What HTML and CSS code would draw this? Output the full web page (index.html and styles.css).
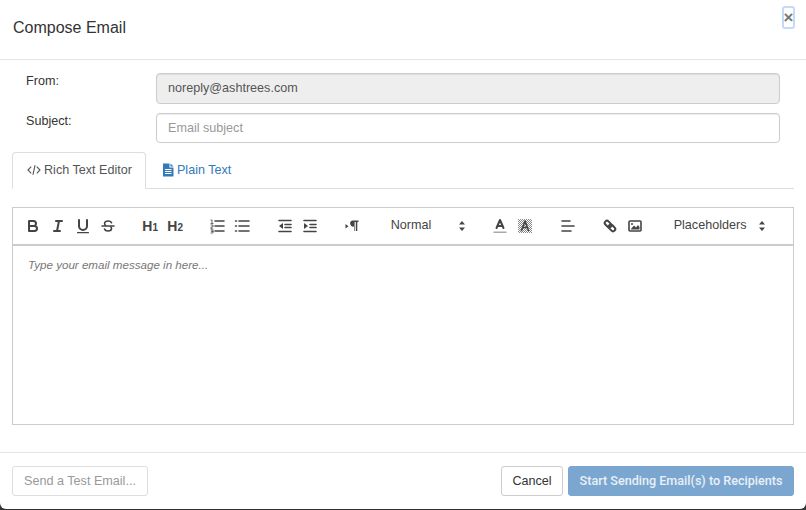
FILE: index.html
```html
<!DOCTYPE html>
<html lang="en">
<head>
<meta charset="utf-8">
<title>Compose Email</title>
<link rel="stylesheet" href="styles.css">
</head>
<body>
<div class="modal">
  <header class="modal-header">
    <h4 class="modal-title">Compose Email</h4>
    <button class="close" type="button">×</button>
  </header>
  <div class="modal-body">
    <div class="form-row">
      <label class="form-label">From:</label>
      <div class="form-input readonly">noreply@ashtrees.com</div>
    </div>
    <div class="form-row">
      <label class="form-label">Subject:</label>
      <div class="form-input placeholder">Email subject</div>
    </div>
    <nav class="tabs">
      <a class="tab active"><svg class="tab-icon" viewBox="0 0 14 14"><path d="M4.2 3.6 1 7l3.2 3.4M9.8 3.6 13 7l-3.2 3.4M8.100 2.200 5.900 11.800" fill="none" stroke="#555" stroke-width="1.100"/></svg>Rich Text Editor</a>
      <a class="tab"><svg class="tab-icon file" viewBox="0 0 11 14"><path d="M0 .5h6.500v4h4V13.500H0Z" fill="#337ab7"/><path d="M7.500.5l3 3h-3Z" fill="#337ab7"/><path d="M2 6.500h6.500M2 8.500h6.500M2 10.500h6.500" stroke="#fff" stroke-width="1"/></svg>Plain Text</a>
    </nav>
    <div class="editor">
      <div class="toolbar">
        <div class="group">
          <span class="btn"><svg viewBox="0 0 18 18"><path class="s" d="M5 4h4.500a2.500 2.500 0 0 1 0 5H5ZM5 9h5.500a2.500 2.500 0 0 1 0 5H5Z"/></svg></span>
          <span class="btn"><svg viewBox="0 0 18 18"><path class="s" d="M7 4h6M5 14h6M8 14l2-10"/></svg></span>
          <span class="btn"><svg viewBox="0 0 18 18"><path class="s" d="M5 3v6a4 4 0 0 0 8 0V3"/><rect class="f" x="3" y="15" width="12" height="1.200" rx=".5"/></svg></span>
          <span class="btn"><svg viewBox="0 0 18 18"><path class="s thin" d="M12.500 5.700C12 4.600 10.800 4 9 4 7 4 5.600 5 5.600 6.500c0 .7.3 1.300.9 1.800M5.500 12c.5 1.400 1.700 2 3.500 2 2 0 3.500-1 3.500-2.500 0-.6-.2-1-.5-1.500"/><path class="s thin" d="M3 9h12"/></svg></span>
        </div>
        <div class="group">
          <span class="btn head">H<span class="sub">1</span></span>
          <span class="btn head">H<span class="sub">2</span></span>
        </div>
        <div class="group">
          <span class="btn"><svg viewBox="0 0 18 18"><path class="s thin" d="M7 4h9M7 9h9M7 14h9"/><path class="s hair" d="M3 3h1v3M3 6.500h2M3 8h2v2H3v2h2M3 13h2v3H3M3.500 14.500H5"/></svg></span>
          <span class="btn"><svg viewBox="0 0 18 18"><path class="s thin" d="M6 4h10M6 9h10M6 14h10M2.500 4h1M2.500 9h1M2.500 14h1"/></svg></span>
        </div>
        <div class="group">
          <span class="btn"><svg viewBox="0 0 18 18"><path class="s thin" d="M3 3.500h12M9 7.500h6M9 10.500h6M3 14.500h12"/><path class="f" d="M3 9l4-3v6Z"/></svg></span>
          <span class="btn"><svg viewBox="0 0 18 18"><path class="s thin" d="M3 3.500h12M9 7.500h6M9 10.500h6M3 14.500h12"/><path class="f" d="M7 9 3 6v6Z"/></svg></span>
        </div>
        <div class="group">
          <span class="btn"><svg viewBox="0 0 18 18"><path class="f" d="M2.500 7l3 2.200-3 2.200Z"/><path class="f" d="M9.500 3.500h6v1.500h-1.200v9h-1.500V5h-1.200v9H11V9.500a3 3 0 0 1-1.500-6Z"/></svg></span>
        </div>
        <div class="picker normal"><span class="picker-label">Normal</span><svg class="updown" viewBox="0 0 8 12"><path d="M4 1 7 4.500H1ZM4 11 1 7.500H7Z"/></svg></div>
        <div class="group color-group">
          <span class="btn"><svg viewBox="0 0 18 18"><path class="s" d="M5.500 11 9 3l3.500 8M6.500 9h5"/><rect class="under" x="2.500" y="14.500" width="13" height="1.500"/></svg></span>
          <span class="btn"><svg viewBox="0 0 18 18"><defs><pattern id="dots" width="2" height="2" patternUnits="userSpaceOnUse"><rect width="1" height="1" fill="#888"/><rect x="1" y="1" width="1" height="1" fill="#888"/></pattern></defs><rect x="2" y="2" width="14" height="14" fill="url(#dots)"/><path class="s thin" d="M5.500 13.500 9 4l3.500 9.500M6.500 10.500h5"/></svg></span>
        </div>
        <div class="group align-group">
          <span class="btn"><svg viewBox="0 0 18 18"><path class="s thin" d="M3 4h8M3 9h12M3 14h9"/></svg></span>
        </div>
        <div class="group">
          <span class="btn"><svg viewBox="0 0 18 18"><g transform="rotate(45 9 9)"><rect class="s link" x="2.500" y="6.800" width="7.500" height="4.400" rx="2.200"/><rect class="s link" x="8" y="6.800" width="7.500" height="4.400" rx="2.200"/></g></svg></span>
          <span class="btn"><svg viewBox="0 0 18 18"><rect x="3" y="4" width="12" height="10" rx="1" fill="none" stroke="#444" stroke-width="1.600"/><path class="f" d="M4.500 12.500 8 8.500l2 2 2-2.500 1.500 2v2.500Z"/><circle class="f" cx="6" cy="7" r="1"/></svg></span>
        </div>
        <div class="picker placeholders"><span class="picker-label">Placeholders</span><svg class="updown" viewBox="0 0 8 12"><path d="M4 1 7 4.500H1ZM4 11 1 7.500H7Z"/></svg></div>
      </div>
      <div class="editor-area"><em>Type your email message in here...</em></div>
    </div>
  </div>
  <footer class="modal-footer">
    <button class="button test" type="button">Send a Test Email...</button>
    <div class="footer-actions">
      <button class="button cancel" type="button">Cancel</button>
      <button class="button primary" type="button">Start Sending Email(s) to Recipients</button>
    </div>
  </footer>
</div>
</body>
</html>
```

FILE: styles.css
```css
* { box-sizing: border-box; }
html, body { margin: 0; height: 510px; overflow: hidden; }
body { background: #333; font-family: "Liberation Sans", Arial, sans-serif; font-size: 12.6px; color: #333; }
.modal { width: 806px; height: 509px; background: #fff; border-radius: 0 0 6px 6px; display: flex; flex-direction: column; }
.modal-header { height: 60px; flex: none; border-bottom: 1px solid #e5e5e5; padding: 7px 12px 0 13px; display: flex; justify-content: space-between; align-items: flex-start; }
.modal-title { margin: 12px 0 0; font-size: 16px; font-weight: 400; line-height: 18px; color: #333; }
.close { width: 11px; height: 21px; padding: 0; border: 0; outline: 2px solid #c4daf9; outline-offset: -1px; border-radius: 2px; background: #fff; color: #777; font: 700 17px/21px "Liberation Sans", sans-serif; text-align: center; }
.modal-body { flex: 1; padding: 13px 12px 0; }
.form-row { display: flex; height: 30px; margin: 0 14px 9px; }
.form-row:first-child { height: 31px; margin-bottom: 9px; }
.form-label { width: 130px; flex: none; line-height: 14px; padding-top: 1px; }
.form-input { width: 624px; border: 1px solid #ccc; border-radius: 4px; padding: 0 11px; line-height: 28px; box-shadow: inset 0 1px 1px rgba(0,0,0,.075); }
.readonly { background: #eee; color: #555; }
.placeholder { color: #999; }
.tabs { display: flex; height: 37px; margin: 9px 0 0; border-bottom: 1px solid #ddd; }
.tab { display: flex; align-items: center; height: 37px; padding: 0 14px 2px; color: #337ab7; border: 1px solid transparent; border-radius: 4px 4px 0 0; }
.tab.active { color: #555; background: #fff; border-color: #ddd #ddd #fff; padding-right: 13px; }
.tab-icon { width: 14px; height: 14px; margin-right: 3px; }
.tab-icon.file { width: 11px; margin-right: 3px; margin-left: 2px; }
.editor { margin-top: 18px; height: 218px; border: 1px solid #ccc; display: flex; flex-direction: column; }
.toolbar { height: 38px; flex: none; border-bottom: 2px solid #ccc; display: flex; align-items: center; padding: 0 0 0 7.500px; gap: 17.200px; }
.group { display: flex; }
.color-group { margin-left: 4.500px; }
.align-group { margin-left: 1px; }
.btn { width: 25px; height: 24px; display: flex; align-items: center; justify-content: center; color: #444; }
.btn svg { width: 18px; height: 18px; }
.head { font: 700 14px/24px "Liberation Sans", sans-serif; align-items: baseline; }
.sub { font-size: 10px; line-height: 1; }
.s { fill: none; stroke: #444; stroke-width: 2; stroke-linecap: round; stroke-linejoin: round; }
.s.thin { stroke-width: 1.600; }
.s.hair { stroke-width: .8; }
.f { fill: #444; }
.under { fill: #aaa; }
.picker { display: flex; align-items: center; color: #444; height: 24px; justify-content: space-between; }
.picker-label { display: block; margin-top: -2px; }
.updown { width: 8px; height: 12px; fill: #444; }
.normal { width: 75px; margin-left: 9.200px; }
.placeholders { width: 92px; margin-left: 8.800px; }
.editor-area { flex: 1; padding: 11px 15px; font-size: 11.600px; line-height: 16px; color: #777; }
.modal-footer { height: 57px; flex: none; border-top: 1px solid #e5e5e5; margin-top: -1px; padding: 13px 12px 0; display: flex; justify-content: space-between; align-items: flex-start; }
.footer-actions { display: flex; gap: 5px; }
.button { height: 30px; border-radius: 3px; border: 1px solid #ccc; background: #fff; font: 12.6px/20px "Liberation Sans", sans-serif; color: #333; padding: 0; white-space: nowrap; }
.test { width: 136px; color: #999; border-color: #ddd; }
.cancel { width: 62px; }
.primary { width: 226px; background: #7aa6cf; border-color: #7aa6cf; color: #e9f0f7; font: 500 12.6px/20px Roboto, sans-serif; }
```
